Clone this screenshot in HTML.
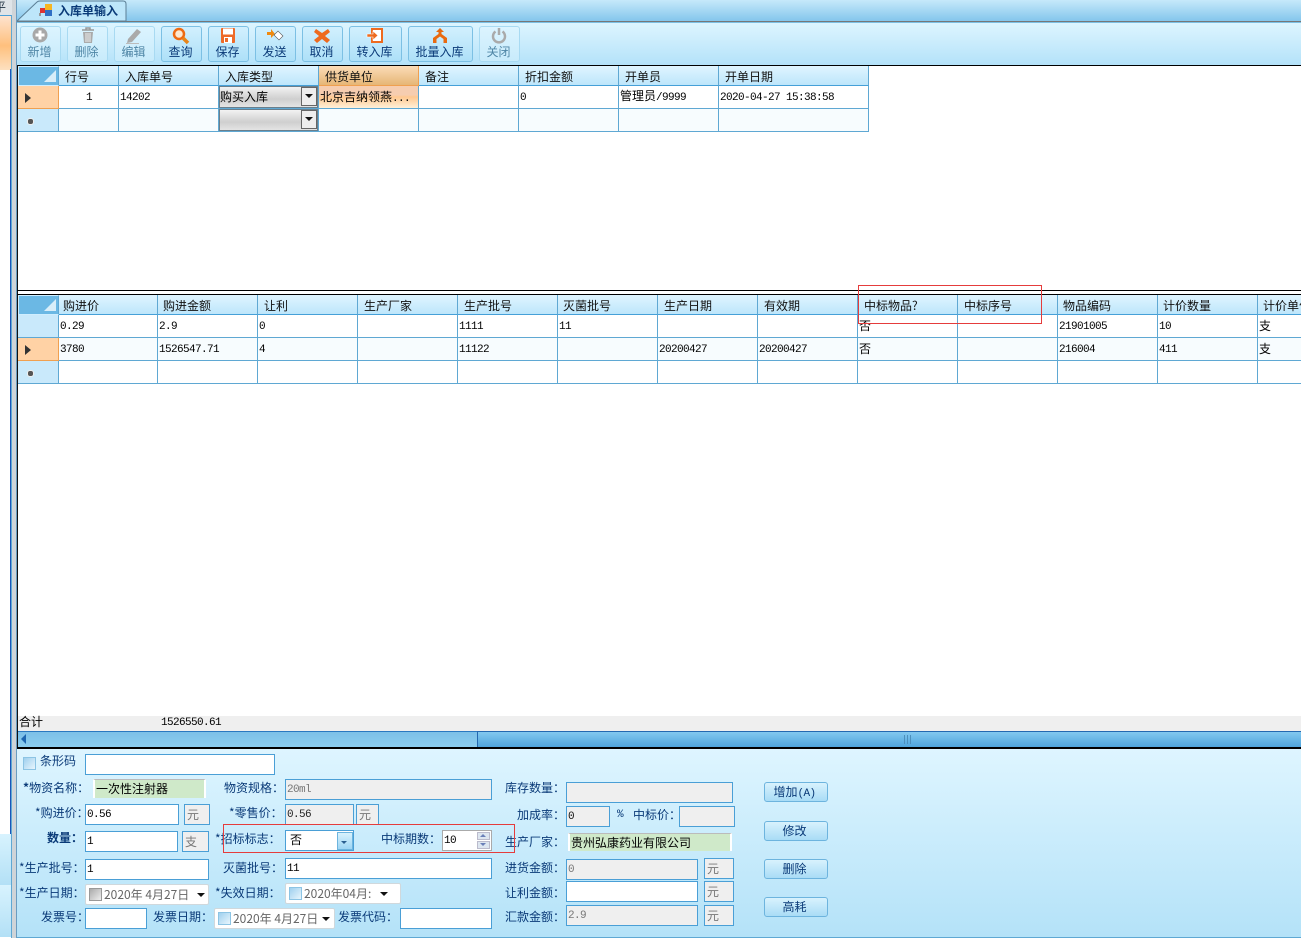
<!DOCTYPE html>
<html><head><meta charset="utf-8"><style>
html,body{margin:0;padding:0;background:#fff}
#p{position:relative;width:1301px;height:938px;overflow:hidden;background:#fff;font:12px/14px "WenQuanYi Zen Hei","Noto Sans CJK SC",sans-serif;color:#000}
#p div,#p table,#p svg{position:absolute}
.n{font-family:"Liberation Mono",monospace;font-size:11px;letter-spacing:-.6px}
.t{white-space:nowrap;color:#0a3a78}
.b{box-sizing:border-box;background:#fff;border:1px solid #4a9fd6;padding:1px 0 0 1px;line-height:14px;white-space:nowrap;overflow:hidden}
.g{background:#efefef;color:#777}
.u{box-sizing:border-box;background:#efefef;border:1px solid #4a9fd6;color:#777;padding:3px 0 0 2px;line-height:14px}
.tb{box-sizing:border-box;top:26px;height:36px;border:1px solid #7cc0e4;border-radius:3px;background:linear-gradient(#d2f0fe,#ade0f8);color:#0a3a78;text-align:center}
.tb span{position:absolute;left:-2px;right:0;top:18px;line-height:14px}
.tb svg{margin-left:-1px}
.dis{background:linear-gradient(#dcf4ff,#c8ebfb);border-color:#a8daf2;color:#4f86a6}
.btn{box-sizing:border-box;left:764px;width:64px;height:20px;border:1px solid #6db4de;border-radius:3px;background:linear-gradient(#d8f2fd,#a9dcf6);color:#0a3a78;text-align:center;line-height:17px;padding-right:3px}
table{border-collapse:separate;border-spacing:0;table-layout:fixed}
td{box-sizing:border-box;border-right:1px solid #5fa8d3;border-bottom:1px solid #5fa8d3;padding:0 0 0 1px;overflow:hidden;white-space:nowrap;vertical-align:middle;line-height:14px}
tr.h td{background:linear-gradient(#e0f5ff,#bde6fb);padding:2px 0 0 6px;color:#111;height:20px;border-bottom-color:#45a0d8}
tr.r td{height:23px}
td.rh{background:#c9e9fb;padding:0}
td.sel{background:#ffd2a5;border-color:#f0a050}
tr.h td.rh{background:#6bb8e4;border:1px solid #cfeeff;border-right:1px solid #5fa8d3}
.alt td{background:#f7fcfe}
.tri{width:0;height:0;border-left:6px solid #333;border-top:5px solid transparent;border-bottom:5px solid transparent}
.dot{width:5px;height:5px;border-radius:3px;background:#555;border:1px solid #eee}
.cor{width:0;height:0;border-left:12px solid transparent;border-bottom:12px solid #d8eef9}
.dd{width:0;height:0;border-left:4px solid transparent;border-right:4px solid transparent;border-top:4px solid #111}
.cb{box-sizing:border-box;width:13px;height:13px;border:1px solid #8cc4e4;background:linear-gradient(135deg,#9fd0ee,#e8f6fd)}
.date{box-sizing:border-box;background:#fff;border:1px solid #d0d8dc;border-radius:2px;color:#666;white-space:nowrap}
.date span{position:absolute;top:3px;line-height:14px}
.red{box-sizing:border-box;border:1px solid #e53c3c}
</style></head><body><div id="p">

<!-- left strip -->
<div style="left:0;top:0;width:12px;height:938px;background:#fff"></div>
<div style="left:0;top:0;width:12px;height:15px;background:#dfe4e8;overflow:hidden;font-size:12px;line-height:14px"><div style="left:-6px;top:0;color:#234">平</div></div>
<div style="left:0;top:15px;width:11px;height:54px;background:linear-gradient(#fde3cf,#ffc07d 55%,#fde0c0);border-top:1px solid #4a9fd6"></div>
<div style="left:10px;top:69px;width:2px;height:765px;background:#1b55b8"></div>
<div style="left:0;top:834px;width:11px;height:51px;background:linear-gradient(#d8f3fe,#b3e0f6)"></div>
<div style="left:0;top:885px;width:11px;height:52px;background:linear-gradient(#d8f3fe,#b3e0f6)"></div>
<div style="left:11px;top:15px;width:1px;height:923px;background:#5fa8d3"></div>
<div style="left:12px;top:0;width:4px;height:938px;background:#cfd4d8"></div>
<div style="left:16px;top:0;width:1px;height:938px;background:#6a9cc0"></div>

<!-- tab strip -->
<div style="left:17px;top:0;width:1284px;height:21px;background:linear-gradient(#c6e9fa,#84c6ec);border-bottom:1px solid #777"></div>
<svg style="left:17px;top:0" width="112" height="22"><path d="M0.5 20.5L20 2Q21 1 23 1H106Q109 1 109 4V21H0Z" fill="#bde6fa" stroke="#5c7f95"/></svg>
<svg style="left:39px;top:3px" width="16" height="15"><rect x="1" y="5" width="5" height="5" fill="#d33"/><rect x="6" y="1" width="7" height="6" fill="#f6b521"/><rect x="6" y="7" width="7" height="6" fill="#2f6fc4"/><rect x="0" y="10" width="2" height="3" fill="#999"/></svg>
<div class="t" style="left:58px;top:4px;color:#0a3a78;font-weight:bold">入库单输入</div>

<!-- toolbar -->
<div style="left:17px;top:22px;width:1284px;height:43px;background:linear-gradient(#ddf5ff,#b4e2f9);border-top:1px solid #7cc0e4;box-sizing:border-box"></div>
<div class="tb dis" style="left:20px;width:41px"><svg style="left:11px;top:0" width="18" height="18"><circle cx="9" cy="8" r="7.5" fill="#a8a8a8"/><path d="M9 3.500V12.500M4.500 8H13.500" stroke="#fff" stroke-width="3"/></svg><span>新增</span></div>
<div class="tb dis" style="left:67px;width:41px"><svg style="left:13px;top:0" width="16" height="18"><path d="M2 3H14M6 3V1H10V3" stroke="#999" stroke-width="1.500" fill="none"/><path d="M3 5H13L12 16H4Z" fill="#aaa"/><path d="M6 6V15M8 6V15M10 6V15" stroke="#eee"/></svg><span>删除</span></div>
<div class="tb dis" style="left:114px;width:41px"><svg style="left:11px;top:0" width="18" height="18"><path d="M3 12L12 2L16 5L7 15L2 16Z" fill="#aaa"/><path d="M1 16.500H14" stroke="#bbb"/></svg><span>编辑</span></div>
<div class="tb" style="left:161px;width:41px"><svg style="left:11px;top:0" width="18" height="18"><circle cx="7" cy="7" r="5" fill="#fde8d0" stroke="#ee6a12" stroke-width="2.500"/><path d="M11 11L16 16" stroke="#e8851a" stroke-width="3.500"/></svg><span>查询</span></div>
<div class="tb" style="left:208px;width:41px"><svg style="left:11px;top:0" width="18" height="18"><rect x="2" y="1" width="14" height="15" rx="1" fill="#ee6a28"/><rect x="4" y="1.500" width="10" height="6" fill="#fff"/><rect x="5" y="10" width="8" height="6" fill="#fff"/><rect x="6" y="11" width="3" height="4" fill="#ee6a28"/></svg><span>保存</span></div>
<div class="tb" style="left:255px;width:41px"><svg style="left:11px;top:2px" width="18" height="14"><path d="M1 3H5V0L9 5L5 9V6H1Z" fill="#f08a10"/><path d="M8 6L12 2L17 7L13 11Z" fill="#fff" stroke="#555" stroke-width=".6"/></svg><span>发送</span></div>
<div class="tb" style="left:302px;width:41px"><svg style="left:11px;top:0" width="18" height="18"><path d="M3 2L9 6L15 2L17 5L12 9L17 13L14 16L9 12L4 16L1 13L6 9L1 5Z" fill="#ee6a1e"/></svg><span>取消</span></div>
<div class="tb" style="left:349px;width:53px"><svg style="left:17px;top:0" width="18" height="18"><rect x="5" y="1" width="12" height="15" fill="#ee6a1e"/><rect x="7" y="3" width="8" height="11" fill="#fff"/><path d="M1 7H7V4L12 8.500L7 13V10H1Z" fill="#ee6a1e" stroke="#fff" stroke-width=".6"/></svg><span>转入库</span></div>
<div class="tb" style="left:408px;width:65px"><svg style="left:23px;top:0" width="18" height="18"><path d="M9 1L13 5H10.500V7L16 11V16H12.500V12L9 9.500L5.500 12V16H2V11L7.500 7V5H5Z" fill="#e96a10"/></svg><span>批量入库</span></div>
<div class="tb dis" style="left:479px;width:41px"><svg style="left:11px;top:0" width="18" height="18"><path d="M5.500 4.500A6 6 0 1 0 12.500 4.500" fill="none" stroke="#aaa" stroke-width="2.500"/><path d="M9 1V8" stroke="#aaa" stroke-width="2.500"/></svg><span>关闭</span></div>

<!-- grid 1 frame -->
<div style="left:17px;top:65px;width:1284px;height:1px;background:#000"></div>
<div style="left:17px;top:65px;width:1px;height:684px;background:#111"></div>
<div style="left:17px;top:290px;width:1284px;height:1px;background:#000"></div>

<table style="left:18px;top:66px;width:851px">
<colgroup><col style="width:41px"><col style="width:60px"><col style="width:100px"><col style="width:100px"><col style="width:100px"><col style="width:100px"><col style="width:100px"><col style="width:100px"><col style="width:150px"></colgroup>
<tr class="h"><td class="rh"></td><td>行号</td><td>入库单号</td><td>入库类型</td><td style="background:linear-gradient(#fbdcb8,#e6b676);border-color:#f0a050">供货单位</td><td>备注</td><td>折扣金额</td><td>开单员</td><td>开单日期</td></tr>
<tr class="r"><td class="rh sel"></td><td style="text-align:center"><span class="n">1</span></td><td><span class="n">14202</span></td><td></td><td style="background:linear-gradient(#f6cdb0 0,#f6cdb0 40%,#ffc890 50%,#fff0d8 100%);padding-top:2px">北京吉纳领燕<span class="n">...</span></td><td></td><td><span class="n">0</span></td><td>管理员<span class="n">/9999</span></td><td><span class="n">2020-04-27 15:38:58</span></td></tr>
<tr class="r alt"><td class="rh" style="background:#c9e9fb"></td><td></td><td></td><td></td><td></td><td></td><td></td><td></td><td></td></tr>
</table>
<div class="cor" style="left:44px;top:70px"></div>
<div class="tri" style="left:25px;top:93px"></div>
<div class="dot" style="left:27px;top:118px"></div>
<!-- combos -->
<div style="box-sizing:border-box;left:219px;top:86px;width:99px;height:22px;border:1px solid #6a7f8c;background:linear-gradient(#f2f2f2,#cfcfcf 60%,#e4e4e4);padding:3px 0 0 0">购买入库</div>
<div style="box-sizing:border-box;left:301px;top:87px;width:16px;height:19px;border:1px solid #666;background:#eee"></div><div class="dd" style="left:305px;top:94px"></div>
<div style="box-sizing:border-box;left:219px;top:109px;width:99px;height:22px;border:1px solid #6a7f8c;background:linear-gradient(#f2f2f2,#cfcfcf 60%,#e4e4e4)"></div>
<div style="box-sizing:border-box;left:301px;top:110px;width:16px;height:19px;border:1px solid #666;background:#eee"></div><div class="dd" style="left:305px;top:117px"></div>

<!-- grid 2 -->
<div style="left:17px;top:294px;width:1284px;height:1px;background:#000"></div>
<table style="left:18px;top:295px;width:1340px">
<colgroup><col style="width:41px"><col style="width:99px"><col style="width:100px"><col style="width:100px"><col style="width:100px"><col style="width:100px"><col style="width:100px"><col style="width:100px"><col style="width:100px"><col style="width:100px"><col style="width:100px"><col style="width:100px"><col style="width:100px"><col style="width:100px"></colgroup>
<tr class="h"><td class="rh"></td><td style="padding-left:4px">购进价</td><td style="padding-left:5px">购进金额</td><td>让利</td><td>生产厂家</td><td>生产批号</td><td style="padding-left:5px">灭菌批号</td><td>生产日期</td><td>有效期</td><td>中标物品?</td><td>中标序号</td><td style="padding-left:5px">物品编码</td><td style="padding-left:5px">计价数量</td><td style="padding-left:5px">计价单位</td></tr>
<tr class="r"><td class="rh"></td><td><span class="n">0.29</span></td><td><span class="n">2.9</span></td><td><span class="n">0</span></td><td></td><td><span class="n">1111</span></td><td><span class="n">11</span></td><td></td><td></td><td>否</td><td></td><td><span class="n">21901005</span></td><td><span class="n">10</span></td><td>支</td></tr>
<tr class="r alt"><td class="rh sel" style="background:#ffd2a5"></td><td><span class="n">3780</span></td><td><span class="n">1526547.71</span></td><td><span class="n">4</span></td><td></td><td><span class="n">11122</span></td><td></td><td><span class="n">20200427</span></td><td><span class="n">20200427</span></td><td>否</td><td></td><td><span class="n">216004</span></td><td><span class="n">411</span></td><td>支</td></tr>
<tr class="r"><td class="rh"></td><td></td><td></td><td></td><td></td><td></td><td></td><td></td><td></td><td></td><td></td><td></td><td></td><td></td></tr>
</table>
<div class="cor" style="left:44px;top:299px"></div>
<div class="tri" style="left:25px;top:345px"></div>
<div class="dot" style="left:27px;top:370px"></div>

<!-- sum + scrollbar -->
<div style="left:18px;top:716px;width:1283px;height:15px;background:#efefef"></div>
<div style="left:19px;top:715px;line-height:14px">合计</div>
<div class="n" style="left:161px;top:716px;line-height:14px">1526550.61</div>
<div style="left:18px;top:731px;width:459px;height:16px;background:linear-gradient(#7cc0e8,#8ccdef);border-top:1px solid #2a78c0;box-sizing:border-box"></div>
<div style="left:477px;top:731px;width:824px;height:16px;background:linear-gradient(#82c8f0,#4fa4dc);border-top:1px solid #2468b0;border-left:1px solid #2468b0;box-sizing:border-box"></div>
<svg style="left:904px;top:735px" width="10" height="9"><path d="M.5 0V9M3.500 0V9M6.500 0V9" stroke="#4d8fbc"/></svg>
<svg style="left:21px;top:734px" width="6" height="11"><path d="M5 0V10L0 5Z" fill="#1e66b0"/></svg>
<div style="left:17px;top:747px;width:1284px;height:2px;background:#000"></div>

<!-- form panel -->
<div style="left:17px;top:749px;width:1284px;height:188px;background:linear-gradient(#def5ff,#b4e2f8)"></div>
<div style="left:17px;top:937px;width:1284px;height:1px;background:#5fa8d3"></div>

<div class="cb" style="left:23px;top:757px"></div>
<div class="t" style="left:40px;top:754px">条形码</div>
<div class="b" style="left:85px;top:754px;width:190px;height:21px"></div>

<div class="t" style="left:23px;top:781px"><b style="font-weight:bold">*</b>物资名称：</div>
<div style="box-sizing:border-box;left:93px;top:779px;width:113px;height:19px;background:#cfe9c9;border:2px solid #fff;border-top:1px solid #bbb;border-bottom:none;padding:2px 0 0 1px">一次性注射器</div>
<div class="t" style="left:224px;top:781px">物资规格：</div>
<div class="b g" style="left:285px;top:779px;width:207px;height:21px"><span class="n">20ml</span></div>
<div class="t" style="left:505px;top:781px">库存数量：</div>
<div class="b g" style="left:566px;top:782px;width:167px;height:21px"></div>
<div class="btn" style="top:782px">增加<span class="n">(A)</span></div>

<div class="t" style="left:35px;top:806px">*购进价：</div>
<div class="b" style="left:85px;top:804px;width:94px;height:21px"><span class="n">0.56</span></div>
<div class="u" style="left:184px;top:804px;width:26px;height:21px">元</div>
<div class="t" style="left:229px;top:806px">*零售价：</div>
<div class="b g" style="left:285px;top:804px;width:69px;height:21px;color:#222"><span class="n">0.56</span></div>
<div class="u" style="left:356px;top:804px;width:23px;height:21px">元</div>
<div class="t" style="left:517px;top:808px">加成率：</div>
<div class="b g" style="left:566px;top:806px;width:44px;height:21px;color:#111"><span class="n">0</span></div>
<div class="t n" style="left:617px;top:808px">%</div>
<div class="t" style="left:633px;top:808px">中标价：</div>
<div class="b g" style="left:679px;top:806px;width:56px;height:21px"></div>
<div class="btn" style="top:821px">修改</div>

<div class="t" style="left:47px;top:831px;font-weight:bold">数量：</div>
<div class="b" style="left:85px;top:831px;width:93px;height:21px"><span class="n">1</span></div>
<div class="u" style="left:182px;top:831px;width:27px;height:21px">支</div>
<div class="t" style="left:215px;top:832px">*招标标志：</div>
<div class="b" style="left:285px;top:830px;width:69px;height:21px;padding-left:4px;padding-top:2px">否</div>
<div style="box-sizing:border-box;left:337px;top:832px;width:16px;height:18px;border:1px solid #6db4de;background:linear-gradient(#d8f2fd,#9ed6f4)"></div>
<div style="left:341px;top:841px;width:0;height:0;border-left:3px solid transparent;border-right:3px solid transparent;border-top:3px solid #2a5f90"></div>
<div class="t" style="left:381px;top:832px">中标期数：</div>
<div class="b" style="left:442px;top:830px;width:50px;height:21px;border-color:#aaa"><span class="n">10</span></div>
<div style="box-sizing:border-box;left:477px;top:832px;width:13px;height:8px;background:#dde6f0;border:1px solid #bbc"></div>
<div style="box-sizing:border-box;left:477px;top:841px;width:13px;height:8px;background:#dde6f0;border:1px solid #bbc"></div>
<div style="left:480px;top:834px;width:0;height:0;border-left:3px solid transparent;border-right:3px solid transparent;border-bottom:3px solid #6a80b8"></div>
<div style="left:480px;top:843px;width:0;height:0;border-left:3px solid transparent;border-right:3px solid transparent;border-top:3px solid #6a80b8"></div>
<div class="t" style="left:505px;top:835px">生产厂家：</div>
<div style="box-sizing:border-box;left:568px;top:833px;width:164px;height:18px;background:#cfe9c9;border:2px solid #fff;border-top:1px solid #bbb;border-bottom:none;padding:2px 0 0 1px">贵州弘康药业有限公司</div>

<div class="t" style="left:19px;top:861px">*生产批号：</div>
<div class="b" style="left:85px;top:859px;width:124px;height:21px"><span class="n">1</span></div>
<div class="t" style="left:223px;top:861px">灭菌批号：</div>
<div class="b" style="left:285px;top:858px;width:207px;height:21px"><span class="n">11</span></div>
<div class="t" style="left:505px;top:861px">进货金额：</div>
<div class="b g" style="left:566px;top:859px;width:132px;height:21px"><span class="n">0</span></div>
<div class="u" style="left:704px;top:858px;width:30px;height:21px">元</div>
<div class="btn" style="top:859px">删除</div>

<div class="t" style="left:19px;top:886px">*生产日期：</div>
<div class="date" style="left:85px;top:884px;width:124px;height:21px"><div style="box-sizing:border-box;left:3px;top:3px;width:13px;height:13px;border:1px solid #999;background:linear-gradient(135deg,#aaa,#eee)"></div><span style="left:18px">2020年 4月27日</span></div>
<div class="dd" style="left:197px;top:893px"></div>
<div class="t" style="left:215px;top:886px">*失效日期：</div>
<div class="date" style="left:285px;top:883px;width:116px;height:21px"><div class="cb" style="left:3px;top:3px"></div><span style="left:18px">2020年04月:</span></div>
<div class="dd" style="left:380px;top:892px"></div>
<div class="t" style="left:505px;top:886px">让利金额：</div>
<div class="b" style="left:566px;top:881px;width:132px;height:21px"></div>
<div class="u" style="left:704px;top:881px;width:30px;height:21px">元</div>

<div class="t" style="left:41px;top:910px">发票号：</div>
<div class="b" style="left:85px;top:908px;width:62px;height:21px"></div>
<div class="t" style="left:153px;top:910px">发票日期：</div>
<div class="date" style="left:214px;top:908px;width:121px;height:21px"><div class="cb" style="left:3px;top:3px"></div><span style="left:18px">2020年 4月27日</span></div>
<div class="dd" style="left:322px;top:917px"></div>
<div class="t" style="left:338px;top:910px">发票代码：</div>
<div class="b" style="left:400px;top:908px;width:92px;height:21px"></div>
<div class="t" style="left:505px;top:910px">汇款金额：</div>
<div class="b g" style="left:566px;top:905px;width:132px;height:21px"><span class="n">2.9</span></div>
<div class="u" style="left:704px;top:905px;width:30px;height:21px">元</div>
<div class="btn" style="top:897px">高耗</div>

<!-- red annotation boxes -->
<div class="red" style="left:858px;top:285px;width:184px;height:39px"></div>
<div class="red" style="left:223px;top:824px;width:292px;height:29px"></div>

</div></body></html>
